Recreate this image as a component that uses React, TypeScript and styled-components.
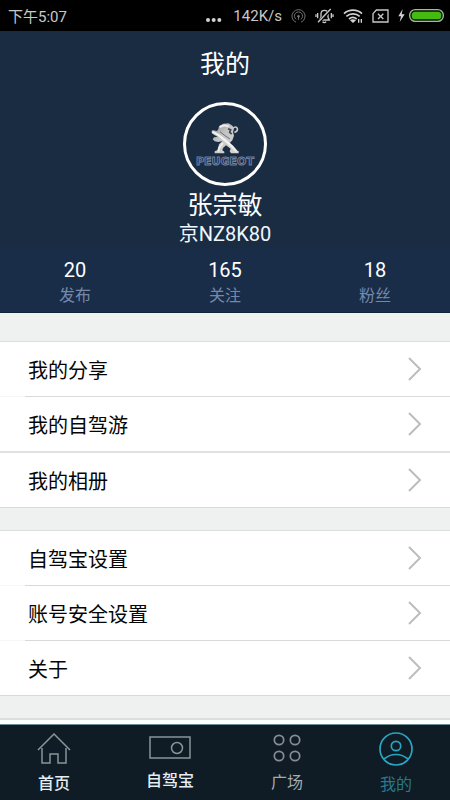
import React from "react";
import styled, { createGlobalStyle } from "styled-components";

const GlobalStyle = createGlobalStyle`
  * { box-sizing: border-box; }
  body {
    margin: 0;
    background: #eff1f1;
    font-family: Roboto, "Noto Sans CJK SC", sans-serif;
  }
  h1, h2, p, dl, dt, dd, ul { margin: 0; padding: 0; font-weight: 400; }
`;

const Screen = styled.div`
  display: flex;
  flex-direction: column;
  height: 100vh;
`;

const StatusBar = styled.div`
  display: flex;
  flex: none;
  align-items: center;
  justify-content: space-between;
  height: 31px;
  padding: 0 6px 0 8px;
  background: #000;
  color: #c9c9c9;
  font-size: 15px;
`;

const StatusIcons = styled.div`
  display: flex;
  align-items: center;
  gap: 9px;
`;

const BatteryGroup = styled.div`
  display: flex;
  align-items: center;
  gap: 4px;
`;

const Content = styled.main`
  display: flex;
  flex: 1;
  flex-direction: column;
  min-height: 0;
  overflow-y: auto;
`;

const Profile = styled.header`
  display: flex;
  flex: none;
  flex-direction: column;
  align-items: center;
  padding: 16px 0 3px;
  background: #1a2c42;
  color: #fff;
`;

const Title = styled.h1`
  font-size: 25px;
  line-height: 36px;
`;

const Avatar = styled.div`
  display: flex;
  flex-direction: column;
  align-items: center;
  width: 84px;
  height: 84px;
  margin: 19px 0 3px;
  padding-top: 18px;
  border: 3px solid #fff;
  border-radius: 50%;
`;

const Brand = styled.span`
  color: #1a2c42;
  font-family: "DejaVu Sans", sans-serif;
  font-size: 11px;
  font-weight: 700;
  line-height: 16px;
  -webkit-text-stroke: 1px #6f7f9f;
`;

const Name = styled.h2`
  font-size: 25px;
  line-height: 34px;
`;

const Plate = styled.p`
  color: #eef7ff;
  font-size: 20px;
  line-height: 22px;
`;

const Stats = styled.dl`
  display: grid;
  flex: none;
  grid-template-columns: repeat(3, 1fr);
  padding: 9px 0 4px;
  border-bottom: 1px solid #10213a;
  background: #192d49;
  text-align: center;
`;

const Stat = styled.div`
  display: flex;
  flex-direction: column-reverse;
`;

const StatLabel = styled.dt`
  color: #7489aa;
  font-size: 16px;
  line-height: 24px;
`;

const StatValue = styled.dd`
  color: #fff;
  font-size: 20px;
  line-height: 27px;
`;

const Group = styled.ul<{ $first?: boolean }>`
  flex: none;
  margin-top: ${(p) => (p.$first ? 28 : 22)}px;
  border-top: 1px solid #dcdede;
  border-bottom: 1px solid #d8d9d9;
  background: #fff;
  list-style: none;
`;

const NextGroup = styled.div`
  flex: 1 0 6px;
  margin-top: 22px;
  border-top: 2px solid #dcdede;
  background: #fff;
`;

const Row = styled.li<{ $full?: boolean }>`
  &:not(:first-child) {
    padding-top: ${(p) => (p.$full ? 2 : 1)}px;
    background-image: ${(p) =>
      p.$full
        ? "linear-gradient(#e0e0e0, #e0e0e0)"
        : "linear-gradient(to right, #f7f7f7 25px, #d9d9d9 25px)"};
    background-repeat: no-repeat;
    background-size: 100% ${(p) => (p.$full ? 2 : 1)}px;
  }
`;

const RowLink = styled.a`
  display: flex;
  align-items: center;
  justify-content: space-between;
  height: 54px;
  padding: 0 28px;
  color: #050505;
  font-size: 20px;
  text-decoration: none;
`;

const TabBar = styled.nav`
  display: grid;
  flex: none;
  grid-template-columns: 108fr 124fr 110fr 108fr;
  height: 76px;
  border-top: 1px solid #6d8b91;
  background: #0f1c25;
`;

const Tab = styled.a<{ $color: string; $bold?: boolean }>`
  display: flex;
  flex-direction: column;
  align-items: center;
  justify-content: center;
  gap: 9px;
  padding-top: 1px;
  color: ${(p) => p.$color};
  font-size: 16px;
  font-weight: ${(p) => (p.$bold ? 500 : 400)};
  line-height: 20px;
  text-decoration: none;
`;

const Dots = () => (
  <svg width="20" height="16" viewBox="0 0 60 48" fill="#d2d2d2">
    <circle cx="12" cy="36" r="6" />
    <circle cx="29" cy="36" r="6" />
    <circle cx="46" cy="36" r="6" />
  </svg>
);

const Hotspot = () => (
  <svg width="15" height="16" viewBox="0 0 48 48" fill="none" stroke="#777" strokeWidth="3">
    <path d="M16 44a21 21 0 1 1 16 0" />
    <path d="M17 35a13 13 0 1 1 14 0" />
    <circle cx="24" cy="25" r="3" fill="#777" />
    <path d="M24 27v9" />
  </svg>
);

const Muted = () => (
  <svg width="19" height="16" viewBox="0 0 57 48" fill="none" stroke="#c8c8c8" strokeWidth="4">
    <path d="M14 36h29l-4-8V18c0-7-5-11-11-11s-10 4-10 11v10zM23 41c2 4 8 4 10 0" />
    <path d="M8 15v16M3 19v8M49 15v16M54 19v8" strokeWidth="4" />
    <path d="M49 3 9 45" stroke="#000" strokeWidth="9" />
    <path d="M47 3 9 43" />
  </svg>
);

const Wifi = () => (
  <svg width="20" height="16" viewBox="0 0 60 48" fill="none" stroke="#d2d2d2" strokeWidth="5">
    <path d="M3 17c15-14 39-14 54 0M10 25c11-10 29-10 40 0M18 33c7-6 16-6 23 0" />
    <path d="m21 37 9 8 9-8c-5-4-13-4-18 0z" fill="#d2d2d2" stroke="none" />
    <path d="M47 33v11M55 33v11" strokeWidth="4" />
  </svg>
);

const Sim = () => (
  <svg width="17" height="14" viewBox="0 0 51 42" fill="none" stroke="#c8c8c8" strokeWidth="4">
    <path d="M13 3h35v36H3V14z" />
    <path d="m18 14 16 16M34 14 18 30" />
  </svg>
);

const Bolt = () => (
  <svg width="7" height="13" viewBox="0 0 21 39" fill="#d2d2d2">
    <path d="M14 0 1 22h8L5 39l15-23h-9z" />
  </svg>
);

const Battery = () => (
  <svg width="35" height="13" viewBox="0 0 105 39">
    <rect x="2" y="2" width="101" height="35" rx="17" fill="#071801" stroke="#a6b99f" strokeWidth="4" />
    <rect x="8" y="8" width="89" height="23" rx="11" fill="#45bb12" />
  </svg>
);

const Lion = () => (
  <svg width="28" height="31" viewBox="0 0 84 93">
    <defs>
      <linearGradient id="metal" x1="0" y1="0" x2="1" y2="1">
        <stop offset="0" stopColor="#8f8f8f" />
        <stop offset=".4" stopColor="#c4c4c4" />
        <stop offset="1" stopColor="#d9d9d9" />
      </linearGradient>
    </defs>
    <path
      fill="url(#metal)"
      d="M24 10 36 2l17-1 11 7 5 8-3 12 3 10-5 14-8 8 10 11 5 10 12 3v7H60l-4-6 3-8-14-10-9 8-2 7 6 4v5H11v-6l9-4 4-17 10-10-12 3-11-2-6-6 4-6 11-1L4 32l-3-6 4-5 13 3 4-5z"
    />
    <path d="M66 16c5-6 12-5 13 1s-4 10-9 11" fill="none" stroke="#c9c9c9" strokeWidth="5" />
    <path d="m4 26 17 9 20 16 23 20 12 14" fill="none" stroke="#f0f0f0" strokeWidth="7" />
    <path d="m26 12 14-5 13 3M36 60l-12 15-2 11" fill="none" stroke="#ededed" strokeWidth="6" />
    <path d="m27 26 15 12 15 10" fill="none" stroke="#6c7178" strokeWidth="3" />
    <path d="m51 17 8 3-3 8 6 5" fill="none" stroke="#3f4854" strokeWidth="5" />
  </svg>
);

const Chevron = () => (
  <svg width="14" height="26" viewBox="0 0 14 26" fill="none" stroke="#bdbdbd" strokeWidth="2" aria-hidden="true">
    <path d="m1 2 11 11L1 24" />
  </svg>
);

const HomeIcon = () => (
  <svg width="34" height="32" viewBox="0 0 34 32" fill="none" stroke="#8b9499" strokeWidth="1.5">
    <path d="M1 17 17 1l16 16M5 15v15h8v-9h8v9h8V15" />
  </svg>
);

const RecorderIcon = () => (
  <svg width="42" height="26" viewBox="0 0 42 26" fill="none" stroke="#8b9499" strokeWidth="1.5">
    <rect x="1" y="1" width="40" height="21" />
    <circle cx="28" cy="12" r="5.5" />
  </svg>
);

const PlazaIcon = () => (
  <svg width="28" height="30" viewBox="0 0 28 30" fill="none" stroke="#858c95" strokeWidth="1.7">
    <circle cx="6" cy="6" r="4.7" />
    <circle cx="22" cy="6" r="4.7" />
    <circle cx="6" cy="22" r="4.7" />
    <circle cx="22" cy="22" r="4.7" />
  </svg>
);

const MeIcon = () => (
  <svg width="34" height="34" viewBox="0 0 34 34" fill="none" stroke="#2aa5c0" strokeWidth="1.7">
    <circle cx="17" cy="17" r="16" />
    <circle cx="17" cy="14" r="4.7" />
    <path d="M5 27c7-6 17-6 24 0" />
  </svg>
);

const stats = [
  { label: "发布", value: 20 },
  { label: "关注", value: 165 },
  { label: "粉丝", value: 18 },
];

const groups = [
  [{ text: "我的分享" }, { text: "我的自驾游" }, { text: "我的相册", full: true }],
  [{ text: "自驾宝设置" }, { text: "账号安全设置" }, { text: "关于" }],
];

export default function App() {
  return (
    <Screen>
      <GlobalStyle />
      <StatusBar>
        <span>下午5:07</span>
        <StatusIcons>
          <Dots />
          <span>142K/s</span>
          <Hotspot />
          <Muted />
          <Wifi />
          <Sim />
          <BatteryGroup>
            <Bolt />
            <Battery />
          </BatteryGroup>
        </StatusIcons>
      </StatusBar>
      <Content>
        <Profile>
          <Title>我的</Title>
          <Avatar>
            <Lion />
            <Brand>PEUGEOT</Brand>
          </Avatar>
          <Name>张宗敏</Name>
          <Plate>京NZ8K80</Plate>
        </Profile>
        <Stats>
          {stats.map((s) => (
            <Stat key={s.label}>
              <StatLabel>{s.label}</StatLabel>
              <StatValue>{s.value}</StatValue>
            </Stat>
          ))}
        </Stats>
        {groups.map((rows, i) => (
          <Group key={i} $first={i === 0}>
            {rows.map((row) => (
              <Row key={row.text} $full={"full" in row}>
                <RowLink href="#">
                  {row.text}
                  <Chevron />
                </RowLink>
              </Row>
            ))}
          </Group>
        ))}
        <NextGroup />
      </Content>
      <TabBar>
        <Tab href="#" $color="#e6edf2" $bold>
          <HomeIcon />
          首页
        </Tab>
        <Tab href="#" $color="#e6edf2" $bold>
          <RecorderIcon />
          自驾宝
        </Tab>
        <Tab href="#" $color="#a4abb1">
          <PlazaIcon />
          广场
        </Tab>
        <Tab href="#" $color="#28788b" aria-current="page">
          <MeIcon />
          我的
        </Tab>
      </TabBar>
    </Screen>
  );
}
